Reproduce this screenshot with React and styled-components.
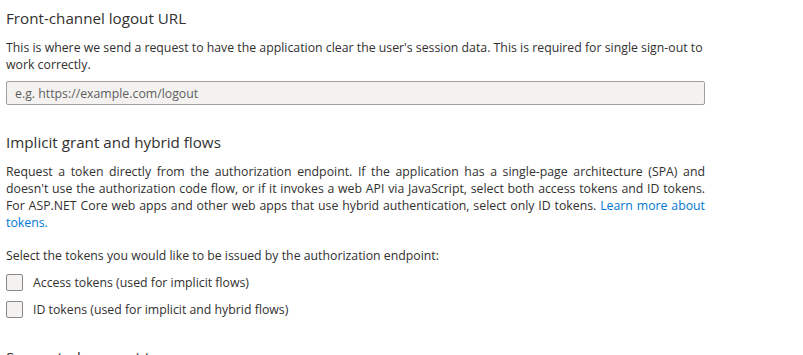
import React from "react";
import styled, { createGlobalStyle } from "styled-components";

const text = "#323130";
const link = "#0078d4";

const GlobalStyle = createGlobalStyle`
  body {
    margin: 0;
    background: #fff;
    font-family: "Open Sans", "Noto Sans", "Liberation Sans", sans-serif;
    color: ${text};
  }
  * {
    box-sizing: border-box;
  }
`;

const Page = styled.div`
  width: 699px;
  margin-left: 6px;
  padding-top: 6px;
`;

const Section = styled.section`
  display: flex;
  flex-direction: column;
  margin-bottom: ${({ $space }) => $space || 25}px;
`;

const Title = styled.h2`
  margin: 0 0 9px;
  font-size: 15.2px;
  font-weight: 400;
  line-height: 24px;
  color: ${text};
`;

const Para = styled.p`
  margin: 0;
  font-size: 12.3px;
  line-height: 17px;
  text-align: ${({ $justify }) => ($justify ? "justify" : "left")};
`;

const Link = styled.a`
  color: ${link};
  text-decoration: none;
`;

const TextInput = styled.input`
  margin-top: 8px;
  height: 24px;
  width: 100%;
  padding: 0 8px;
  font-family: inherit;
  font-size: 12.3px;
  color: ${text};
  background: #f3f2f1;
  border: 1px solid #a19f9d;
  border-radius: 2px;
  outline: none;

  &::placeholder {
    color: #605e5c;
  }
`;

const Prompt = styled.div`
  margin-top: 16px;
  font-size: 12.3px;
  line-height: 17px;
`;

const Options = styled.div`
  display: flex;
  flex-direction: column;
  gap: 10px;
  margin-top: 10px;
`;

const Option = styled.label`
  display: flex;
  align-items: center;
  gap: 10px;
  font-size: 12.3px;
  line-height: 17px;
  cursor: pointer;
`;

const Box = styled.span`
  width: 17px;
  height: 17px;
  flex: none;
  background: #f3f2f1;
  border: 1px solid #8a8886;
  border-radius: 2px;
`;

const CheckOption = ({ label }) => (
  <Option>
    <Box />
    {label}
  </Option>
);

export default function App() {
  return (
    <>
      <GlobalStyle />
      <Page>
        <Section>
          <Title>Front-channel logout URL</Title>
          <Para>
            This is where we send a request to have the application clear the
            user's session data. This is required for single sign-out to work
            correctly.
          </Para>
          <TextInput placeholder="e.g. https://example.com/logout" />
        </Section>
        <Section $space={27}>
          <Title>Implicit grant and hybrid flows</Title>
          <Para $justify>
            Request a token directly from the authorization endpoint. If the
            application has a single-page architecture (SPA) and doesn't use the
            authorization code flow, or if it invokes a web API via JavaScript,
            select both access tokens and ID tokens. For ASP.NET Core web apps
            and other web apps that use hybrid authentication, select only ID
            tokens. <Link href="#">Learn more about tokens.</Link>
          </Para>
          <Prompt>
            Select the tokens you would like to be issued by the authorization
            endpoint:
          </Prompt>
          <Options>
            <CheckOption label="Access tokens (used for implicit flows)" />
            <CheckOption label="ID tokens (used for implicit and hybrid flows)" />
          </Options>
        </Section>
        <Section>
          <Title>Supported account types</Title>
        </Section>
      </Page>
    </>
  );
}
